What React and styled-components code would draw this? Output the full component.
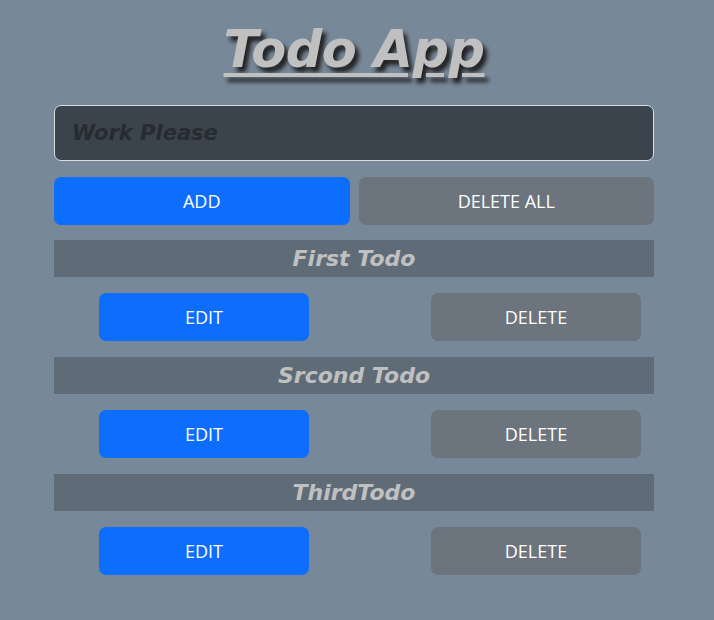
import React from 'react';
import styled, { createGlobalStyle } from 'styled-components';

const GlobalStyle = createGlobalStyle`
  body {
    margin: 0;
    background-color: #778899;
  }
`;

const Page = styled.div`
  width: 600px;
  padding: 14px 0 40px 54px;
  display: flex;
  flex-direction: column;
`;

const Title = styled.h1`
  margin: 0 0 19px;
  height: 72px;
  line-height: 72px;
  text-align: center;
  font-family: "DejaVu Sans", Verdana, sans-serif;
  font-size: 51px;
  font-weight: bold;
  font-style: italic;
  color: #c0c0c0;
  text-decoration: underline;
  text-decoration-thickness: 4px;
  text-underline-offset: 6px;
  text-shadow: 4px 5px 4px #222;
  letter-spacing: -0.5px;
`;

const TodoInput = styled.input`
  box-sizing: border-box;
  width: 600px;
  height: 56px;
  padding: 0 17px;
  background-color: #3b434c;
  border: 1px solid #d8dde2;
  border-radius: 7px;
  outline: none;
  font-family: "Comic Sans MS", "DejaVu Sans", sans-serif;
  font-size: 21px;
  font-weight: bold;
  font-style: italic;
  color: #ddd;

  &::placeholder {
    color: #262c31;
  }
`;

const ButtonRow = styled.div`
  display: grid;
  grid-template-columns: 1fr 1fr;
  gap: 9px;
  margin: 16px 0 15px;
`;

const Button = styled.button`
  height: 48px;
  width: ${p => p.$width || 'auto'};
  border: none;
  border-radius: 7px;
  background-color: ${p => (p.$primary ? '#0d6efd' : '#6c757d')};
  color: #fff;
  font-family: "Segoe UI", "Open Sans", sans-serif;
  font-size: 18px;
  padding: 0;
  cursor: pointer;
`;

const TodoHeading = styled.div`
  height: 37px;
  line-height: 37px;
  background-color: #5f6c78;
  text-align: center;
  font-family: "Comic Sans MS", "DejaVu Sans", sans-serif;
  font-size: 22px;
  font-weight: bold;
  font-style: italic;
  color: #c0c0c0;
`;

const TodoActions = styled.div`
  display: flex;
  justify-content: space-between;
  padding: 16px 13px 16px 45px;
`;

const todos = ['First Todo', 'Srcond Todo', 'ThirdTodo'];

const App = () => (
  <>
    <GlobalStyle />
    <Page>
      <Title>Todo App</Title>
      <TodoInput placeholder="Work Please" />
      <ButtonRow>
        <Button $primary>ADD</Button>
        <Button>DELETE ALL</Button>
      </ButtonRow>
      {todos.map(todo => (
        <div key={todo}>
          <TodoHeading>{todo}</TodoHeading>
          <TodoActions>
            <Button $primary $width="210px">EDIT</Button>
            <Button $width="210px">DELETE</Button>
          </TodoActions>
        </div>
      ))}
    </Page>
  </>
);

export default App;
